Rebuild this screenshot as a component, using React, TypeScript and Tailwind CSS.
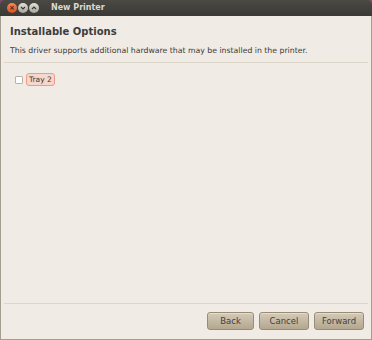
export default function App() {
  const font = { fontFamily: '"DejaVu Sans", "Liberation Sans", sans-serif' };
  return (
    <div className="w-[372px] h-[340px] bg-[#7a4a6a]" style={font}>
      <div className="flex h-full flex-col overflow-hidden rounded-t-[5px]">
        {/* title bar */}
        <div className="flex h-[16px] shrink-0 items-center bg-gradient-to-b from-[#4a4944] to-[#3a3935] pl-[7px]">
          <div className="flex gap-[1px]">
            <span className="flex h-[10px] w-[10px] items-center justify-center rounded-full bg-gradient-to-b from-[#f58a5c] to-[#d8501c] text-[7px] font-bold leading-none text-[#3a2a20]">
              ×
            </span>
            <span className="flex h-[10px] w-[10px] items-center justify-center rounded-full bg-gradient-to-b from-[#e2e0da] to-[#a8a59c]">
              <svg width="6" height="6" viewBox="0 0 6 6">
                <path d="M1 2 L3 4 L5 2" stroke="#3a3935" strokeWidth="1.2" fill="none" />
              </svg>
            </span>
            <span className="flex h-[10px] w-[10px] items-center justify-center rounded-full bg-gradient-to-b from-[#e2e0da] to-[#a8a59c]">
              <svg width="6" height="6" viewBox="0 0 6 6">
                <path d="M1 4 L3 2 L5 4" stroke="#3a3935" strokeWidth="1.2" fill="none" />
              </svg>
            </span>
          </div>
          <span className="ml-[12px] text-[8px] font-bold text-[#dcd8cf]">New Printer</span>
        </div>

        {/* body */}
        <div className="flex flex-1 flex-col border-x border-b border-[#a59d90] bg-[#f0ebe4]">
          <div className="px-[9px] pt-[9px]">
            <div className="text-[10px] font-bold leading-[14px] text-[#3c3c3c]">Installable Options</div>
            <div className="mt-[6px] text-[7.75px] leading-[12px] text-[#3c3c3c]">
              This driver supports additional hardware that may be installed in the printer.
            </div>
          </div>
          <div className="mx-[3px] mt-[5px] h-px bg-[#dcd5ca]" />

          <div className="flex items-center pl-[14px] pt-[10px]">
            <span className="h-[8px] w-[8px] rounded-[1px] border border-[#b9b3a8] bg-white" />
            <span className="ml-[3px] rounded-[3px] border border-[#ee9a88] bg-[#f6d7cc] px-[2px] text-[7.5px] leading-[11px] text-[#3c3c3c]">
              Tray 2
            </span>
          </div>

          <div className="flex-1" />
          <div className="mx-[3px] h-px bg-[#dcd5ca]" />
          <div className="flex justify-end gap-[5px] pb-[9px] pr-[7px] pt-[8px]">
            {[
              ["Back", "w-[47px]"],
              ["Cancel", "w-[50px]"],
              ["Forward", "w-[50px]"],
            ].map(([label, w]) => (
              <button
                key={label}
                className={`${w} h-[18px] rounded-[3px] border border-[#988c76] bg-gradient-to-b from-[#d4cab8] to-[#b3a78f] text-[8.5px] text-[#45403a] shadow-[inset_0_1px_0_#e4dccd]`}
              >
                {label}
              </button>
            ))}
          </div>
        </div>
      </div>
    </div>
  );
}
